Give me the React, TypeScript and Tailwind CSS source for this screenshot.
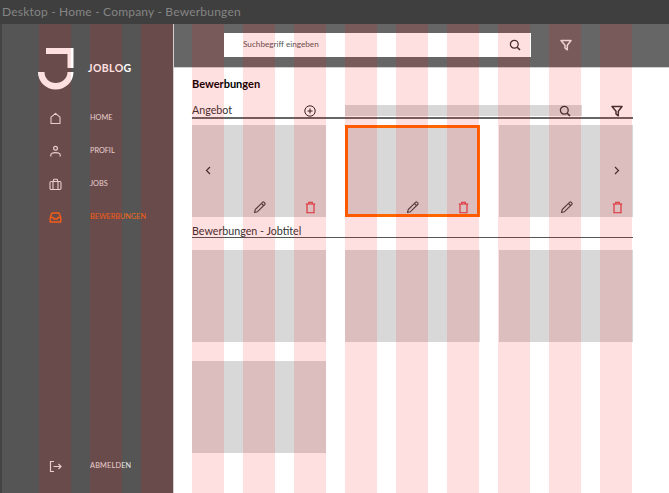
const font = "font-['Lato',sans-serif]";

type IconProps = { className?: string };

function HomeIcon({ className }: IconProps) {
  return (
    <svg width="13" height="13" viewBox="0 0 13 13" fill="none" stroke="currentColor" strokeWidth="1.1" className={className}>
      <path d="M2 5.200L6.500 1.300L11 5.200V11.500H2Z" strokeLinejoin="round" />
    </svg>
  );
}

function UserIcon({ className }: IconProps) {
  return (
    <svg width="13" height="13" viewBox="0 0 13 13" fill="none" stroke="currentColor" strokeWidth="1.2" className={className}>
      <circle cx="6.500" cy="3.300" r="1.900" />
      <path d="M1.800 11.500V10C1.800 8.500 3.500 7.600 6.500 7.600C9.500 7.600 11.200 8.500 11.200 10V11.500" />
    </svg>
  );
}

function BriefcaseIcon({ className }: IconProps) {
  return (
    <svg width="13" height="13" viewBox="0 0 13 13" fill="none" stroke="currentColor" strokeWidth="1.1" className={className}>
      <rect x="1" y="3.500" width="11" height="8" rx="1.200" />
      <path d="M4.500 3.500V2C4.500 1.600 4.800 1.300 5.200 1.300H7.800C8.200 1.300 8.500 1.600 8.500 2V3.500M4 3.500V11.500M9 3.500V11.500" />
    </svg>
  );
}

function InboxIcon({ className }: IconProps) {
  return (
    <svg width="13" height="13" viewBox="0 0 13 13" fill="none" stroke="currentColor" strokeWidth="1.400" className={className}>
      <path d="M1.200 6.500L3 2H10L11.800 6.500V11H1.200Z" strokeLinejoin="round" />
      <path d="M1.200 6.500H4L5 8H8L9 6.500H11.800" strokeLinejoin="round" />
    </svg>
  );
}

function LogoutIcon({ className }: IconProps) {
  return (
    <svg width="13" height="13" viewBox="0 0 13 13" fill="none" stroke="currentColor" strokeWidth="1.200" className={className}>
      <path d="M5 1.500H1.500V11.500H5M4.500 6.500H12M9.500 4L12 6.500L9.500 9" />
    </svg>
  );
}

function SearchIcon({ className }: IconProps) {
  return (
    <svg width="12" height="12" viewBox="0 0 12 12" fill="none" stroke="currentColor" strokeWidth="1.300" className={className}>
      <circle cx="5.300" cy="5.300" r="3.900" />
      <path d="M8.200 8.200L11 11" strokeWidth="1.600" />
    </svg>
  );
}

function FunnelIcon({ className }: IconProps) {
  return (
    <svg width="12" height="12" viewBox="0 0 12 12" fill="none" stroke="currentColor" strokeWidth="1.500" className={className}>
      <path d="M1 1.500H11L7.300 6.200V10.800L5 9V6.200Z" strokeLinejoin="round" />
    </svg>
  );
}

function PlusIcon({ className }: IconProps) {
  return (
    <svg width="12" height="12" viewBox="0 0 12 12" fill="none" stroke="currentColor" strokeWidth="1" className={className}>
      <circle cx="6" cy="6" r="5.200" />
      <path d="M6 3.500V8.500M3.500 6H8.500" />
    </svg>
  );
}

function PencilIcon({ className }: IconProps) {
  return (
    <svg width="13" height="13" viewBox="0 0 13 13" fill="none" stroke="currentColor" strokeWidth="1.100" className={className}>
      <path d="M1.500 11.500L2.300 8.500L9.500 1.300C10 0.800 10.700 0.800 11.200 1.300L11.700 1.800C12.200 2.300 12.200 3 11.700 3.500L4.500 10.700Z" strokeLinejoin="round" />
      <path d="M8.500 2.500L10.500 4.500" />
    </svg>
  );
}

function TrashIcon({ className }: IconProps) {
  return (
    <svg width="13" height="13" viewBox="0 0 13 13" fill="none" stroke="currentColor" strokeWidth="1.100" className={className}>
      <path d="M1.800 3H11.200M4.800 3V1.300H8.200V3M3 3V11.800H10V3" />
    </svg>
  );
}

function ChevronIcon({ right, className }: IconProps & { right?: boolean }) {
  return (
    <svg width="11" height="11" viewBox="0 0 11 11" fill="none" stroke="currentColor" strokeWidth="1.200" className={className}>
      <path d={right ? "M4 2L7.500 5.500L4 9" : "M7 2L3.500 5.500L7 9"} />
    </svg>
  );
}

function Logo() {
  return (
    <svg width="36" height="42" viewBox="0 0 36 42" fill="none">
      <path d="M8 0H35.500V20H29.500V6H8Z" fill="#fff" />
      <path d="M0 24H6.500C6.500 30.500 11.500 35 17.750 35C24 35 29.500 30.500 29.500 24H35.500C35.500 34 27.500 41.500 17.750 41.500C8 41.500 0 34 0 24Z" fill="#fff" />
    </svg>
  );
}

const nav = [
  { label: "HOME", icon: HomeIcon },
  { label: "PROFIL", icon: UserIcon },
  { label: "JOBS", icon: BriefcaseIcon },
  { label: "BEWERBUNGEN", icon: InboxIcon, active: true },
];

function Card({ selected, left, right }: { selected?: boolean; left?: boolean; right?: boolean }) {
  return (
    <div className={`relative h-[92px] bg-[#d8d8d8] ${selected ? "border-[3px] border-[#ff6600]" : ""}`}>
      {left && <ChevronIcon className="absolute left-[11px] top-[40px] text-[#333]" />}
      {right && <ChevronIcon right className="absolute right-[11px] top-[40px] text-[#333]" />}
      <PencilIcon className={`absolute text-[#444] ${selected ? "left-[58px] top-[73px]" : "left-[61px] top-[76px]"}`} />
      <TrashIcon className={`absolute text-[#d8303a] ${selected ? "left-[109px] top-[73px]" : "left-[112px] top-[76px]"}`} />
    </div>
  );
}

function Overlay() {
  return (
    <div className="pointer-events-none absolute inset-x-0 bottom-0 top-6 flex gap-[19px] pl-[39px]">
      {Array.from({ length: 12 }).map((_, i) => (
        <div key={i} className="h-full w-8 bg-[#ff0000]/12" />
      ))}
    </div>
  );
}

export default function App() {
  return (
    <div className={`relative flex h-[493px] w-[669px] flex-col overflow-hidden bg-white ${font}`}>
      <div className="flex h-6 shrink-0 items-center bg-[#3f3f3f] pl-[2px] text-[12px] tracking-[0.2px] text-[#858585]">
        Desktop - Home - Company - Bewerbungen
      </div>

      <div className="flex min-h-0 flex-1">
        <aside className="flex w-[174px] shrink-0 flex-col border-l-2 border-r border-l-[#444] border-r-[#d0d0d0] bg-[#555] pl-[36px] pb-[19px] pt-6">
          <div className="flex items-start gap-[14px]">
            <Logo />
            <span className="mt-[13px] text-[10.500px] font-bold tracking-[0.4px] text-white">JOBLOG</span>
          </div>

          <nav className="mt-[20px] flex flex-col gap-[17px]">
            {nav.map((item) => (
              <div key={item.label} className={`flex h-4 items-center gap-[28px] pl-[11px] text-[7.300px] ${item.active ? "text-[#f26a1b]" : "text-[#e8e8e8]"}`}>
                <item.icon />
                <span>{item.label}</span>
              </div>
            ))}
          </nav>

          <div className="mt-auto flex h-4 items-center gap-[28px] pl-[11px] text-[7.300px] tracking-[0.2px] text-[#e8e8e8]">
            <LogoutIcon />
            <span>ABMELDEN</span>
          </div>
        </aside>

        <main className="min-w-0 flex-1">
          <header className="flex h-11 items-center border-b border-[#d0d0d0] bg-[#666] pb-[2px] pl-[50px]">
            <div className="flex h-6 w-[307px] items-center justify-between bg-white pl-[19px] pr-[10px] text-[8.200px] text-[#555]">
              <span>Suchbegriff eingeben</span>
              <SearchIcon className="text-[#333]" />
            </div>
            <FunnelIcon className="ml-[29px] text-[#eee]" />
          </header>

          <div className="w-[459px] pl-[18px]">
            <h1 className="mt-[8px] text-[11px] leading-[15px] font-bold text-black">Bewerbungen</h1>

            <div className="mt-[13px] flex h-[13px] items-center text-[10.700px] text-[#333]">
              <span className="w-[112px]">Angebot</span>
              <PlusIcon className="text-[#222]" />
              <div className="ml-[29px] flex h-[11px] w-[237px] items-center justify-end bg-[#d8d8d8] pr-[11px]">
                <SearchIcon className="text-[#333]" />
              </div>
              <FunnelIcon className="ml-[29px] text-[#333]" />
            </div>
            <div className="h-[2px] bg-[#666]" />

            <div className="mt-[6px] grid grid-cols-3 gap-x-[19px]">
              <Card left />
              <Card selected />
              <Card right />
            </div>

            <div className="mt-[7px] text-[10.700px] leading-[13px] text-[#333]">Bewerbungen - Jobtitel</div>
            <div className="h-px bg-[#555]" />

            <div className="mt-[12px] grid grid-cols-3 gap-[19px]">
              <div className="h-[92px] bg-[#d8d8d8]" />
              <div className="h-[92px] bg-[#d8d8d8]" />
              <div className="h-[92px] bg-[#d8d8d8]" />
              <div className="h-[92px] bg-[#d8d8d8]" />
            </div>
          </div>
        </main>
      </div>

      <Overlay />
    </div>
  );
}
